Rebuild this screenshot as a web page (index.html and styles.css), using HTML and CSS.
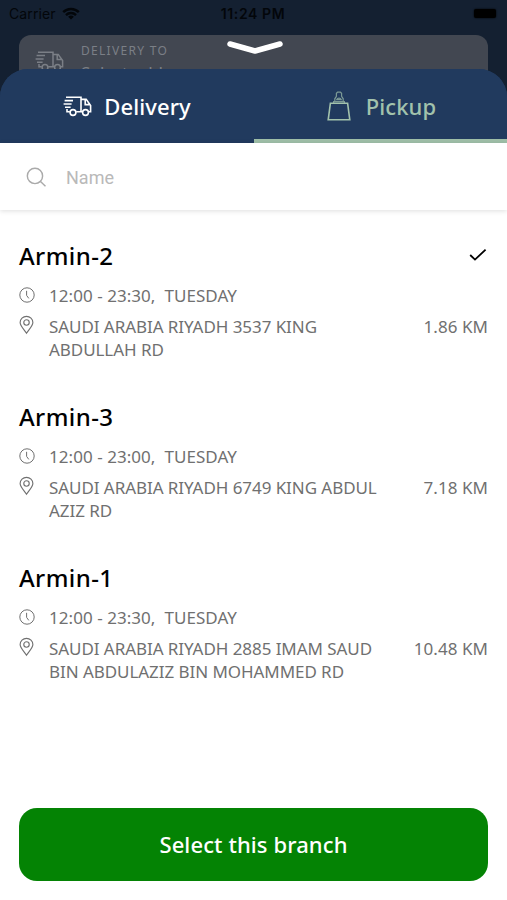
FILE: index.html
```
<!DOCTYPE html>
<html lang="en">
<head>
    <meta charset="UTF-8">
    <title>Select branch</title>
    <meta name="viewport" content="width=device-width, initial-scale=1">
    <link rel="stylesheet" href="styles.css">
</head>
<body>
    <svg class="defs" width="0" height="0">
        <symbol id="truck" viewBox="0 0 29 21">
            <path d="M3 1.2H18V15.8H13.2M6.8 15.8H4V13M18 3.4H23.2L27.6 9.5V15.8H25.6M19.4 15.8H18M22.2 3.6V8.6H27M1.6 4.6H10M.6 8H8.6M2 11.3H7.6"/>
            <circle cx="10" cy="16.5" r="2.9"/>
            <circle cx="22.5" cy="16.5" r="2.9"/>
        </symbol>
        <symbol id="clock" viewBox="0 0 16 16">
            <circle cx="8" cy="8" r="7.2"/>
            <path d="M7.6 3.8V8.4L9.8 11.4"/>
        </symbol>
        <symbol id="pin" viewBox="0 0 16 20">
            <path d="M8 18.8C5.6 15 1.2 11 1.2 7.4A6.8 6.6 0 0 1 14.8 7.4C14.8 11 10.4 15 8 18.8Z"/>
            <circle cx="8" cy="7.3" r="2.9"/>
        </symbol>
    </svg>

    <div class="app">
        <div class="backdrop">
            <div class="status-bar">
                <span class="carrier">Carrier
                    <svg class="wifi" viewBox="0 0 18 13">
                        <path d="M1.2 5.2A11 11 0 0 1 16.8 5.2M4 8.1A7 7 0 0 1 14 8.1"/>
                        <path class="dot" d="M9 12.6L6.1 9.8A4.2 4.2 0 0 1 11.9 9.8Z"/>
                    </svg>
                </span>
                <span class="time">11:24 PM</span>
                <span class="battery"></span>
            </div>
            <div class="address-card">
                <svg class="truck"><use href="#truck"/></svg>
                <div>
                    <div class="label">DELIVERY TO</div>
                    <div class="value">Select address</div>
                </div>
            </div>
            <svg class="handle" viewBox="0 0 58 16"><path d="M4 4L29 11L54 4"/></svg>
        </div>

        <div class="sheet">
            <div class="tabs">
                <div class="tab">
                    <svg class="truck"><use href="#truck"/></svg>
                    <span>Delivery</span>
                </div>
                <div class="tab active">
                    <svg class="bag" viewBox="0 0 24 30">
                        <path d="M3.4 12.2H20.6L22.8 28.8H1.2Z"/>
                        <path class="thin" d="M6.6 12V10.6H17.4V12M7.8 10.4V7.8L9.4 5.4V2.2L10.6 1.2H13.4L14.6 2.2V5.4L16.2 7.8V10.4M9.8 8.6A2.4 2.4 0 0 1 14.2 8.6Z"/>
                    </svg>
                    <span>Pickup</span>
                </div>
            </div>

            <div class="search">
                <svg class="search-icon" viewBox="0 0 22 22"><circle cx="9.4" cy="9.4" r="8"/><path d="M15.2 15.2L20.4 20.2"/></svg>
                <input type="text" placeholder="Name">
            </div>

            <div class="branches">
                <div class="branch">
                    <div class="branch-head">
                        <h2>Armin-2</h2>
                        <svg class="check" viewBox="0 0 20 14"><path d="M2.2 7L7 11.6L17.6 1.6"/></svg>
                    </div>
                    <div class="hours"><svg class="clock"><use href="#clock"/></svg>12:00 - 23:30,&nbsp; TUESDAY</div>
                    <div class="address">
                        <svg class="pin"><use href="#pin"/></svg>
                        <p>SAUDI ARABIA RIYADH 3537 KING<br>ABDULLAH RD</p>
                        <span>1.86 KM</span>
                    </div>
                </div>
                <div class="branch">
                    <div class="branch-head"><h2>Armin-3</h2></div>
                    <div class="hours"><svg class="clock"><use href="#clock"/></svg>12:00 - 23:00,&nbsp; TUESDAY</div>
                    <div class="address">
                        <svg class="pin"><use href="#pin"/></svg>
                        <p>SAUDI ARABIA RIYADH 6749 KING ABDUL<br>AZIZ RD</p>
                        <span>7.18 KM</span>
                    </div>
                </div>
                <div class="branch">
                    <div class="branch-head"><h2>Armin-1</h2></div>
                    <div class="hours"><svg class="clock"><use href="#clock"/></svg>12:00 - 23:30,&nbsp; TUESDAY</div>
                    <div class="address">
                        <svg class="pin"><use href="#pin"/></svg>
                        <p>SAUDI ARABIA RIYADH 2885 IMAM SAUD<br>BIN ABDULAZIZ BIN MOHAMMED RD</p>
                        <span>10.48 KM</span>
                    </div>
                </div>
            </div>

            <div class="footer">
                <button class="select-btn">Select this branch</button>
            </div>
        </div>
    </div>
</body>
</html>
```
FILE: styles.css
```
* { box-sizing: border-box; }
body { margin: 0; font-family: "Noto Sans", sans-serif; background: #fff; }
svg { display: block; flex: none; fill: none; stroke: currentColor; }
.defs { position: absolute; }
.app { height: 900px; display: flex; flex-direction: column; overflow: hidden; background: #142031; }

/* dimmed home screen behind the sheet */
.backdrop { position: relative; flex: none; height: 105px; overflow: hidden; }
.status-bar { display: grid; grid-template-columns: 1fr auto 1fr; align-items: center; height: 27px; padding: 0 11px 0 9px; font-family: Inter, sans-serif; font-size: 14px; color: #03060a; }
.carrier { display: flex; align-items: center; gap: 6px; letter-spacing: .1px; }
.wifi { width: 18px; height: 13px; stroke-width: 2.4; }
.wifi .dot { fill: currentColor; stroke: none; }
.time { padding-left: 1px; font-weight: 600; letter-spacing: .6px; }
.battery { justify-self: end; width: 22px; height: 9px; border-radius: 2px; background: #000; box-shadow: 0 0 2px #000; }
.address-card { display: flex; gap: 17px; height: 90px; margin: 8px 19px 0; padding: 7px 16px; border-radius: 12px; background: #424751; color: #7b7f86; }
.address-card .truck { margin-top: 9px; stroke-width: 1.5; }
.label { font-size: 12px; line-height: 17px; letter-spacing: 1.3px; }
.value { margin-top: 2px; font-size: 17px; line-height: 24px; }
.handle { position: absolute; top: 40px; left: 226px; width: 58px; height: 16px; color: #fff; stroke-width: 5.5; stroke-linecap: round; stroke-linejoin: round; }
.truck { width: 29px; height: 21px; stroke-width: 1.6; }

.sheet { position: relative; flex: 1; display: flex; flex-direction: column; margin-top: -36px; border-radius: 28px 28px 0 0; background: linear-gradient(#213a5e 74px, #fff 74px); overflow: hidden; }
.tabs { display: grid; grid-template-columns: 254px 1fr; height: 74px; background: #213a5e; }
.tab { display: flex; align-items: center; justify-content: center; gap: 12px; border-bottom: 0 solid #9fbfa8; color: #fff; font-size: 22px; font-weight: 500; letter-spacing: .1px; }
.tab.active { gap: 15px; padding: 4px 0 0 2px; border-bottom-width: 4px; color: #a2c2ac; }
.bag { width: 24px; height: 30px; margin-bottom: 1px; stroke-width: 1.6; }
.bag .thin { stroke-width: 1.2; opacity: .7; }

.search { display: flex; align-items: center; gap: 19px; height: 67px; padding: 1px 26px 0; box-shadow: 0 1px 5px #0002; }
.search-icon { width: 21px; height: 21px; color: #aaa; stroke-width: 1.5; }
.search input { flex: 1; min-width: 0; padding: 0; border: 0; outline: 0; font: 18px Roboto, sans-serif; color: #333; }
.search input::placeholder { color: #b9b9b9; opacity: 1; }

.branches { flex: 1; padding: 27px 19px 0; }
.branch { height: 161px; color: #707070; font-size: 17px; }
.branch-head { display: flex; align-items: center; justify-content: space-between; height: 36px; }
h2 { margin: 0; font-size: 24px; font-weight: 500; letter-spacing: .4px; color: #000; }
.check { width: 20px; height: 14px; color: #000; stroke-width: 1.8; }
.hours { display: flex; align-items: center; gap: 14px; height: 24px; margin-top: 10px; letter-spacing: .05px; }
.clock { width: 16px; height: 16px; stroke-width: 1; }
.address { display: flex; gap: 14px; margin-top: 8px; line-height: 23px; letter-spacing: -.06px; }
.address p { flex: 1; margin: 0; white-space: nowrap; }
.address span { letter-spacing: .05px; }
.pin { width: 15px; height: 20px; margin-right: 1px; stroke-width: 1.2; }

.footer { padding: 0 19px 19px; }
.select-btn { display: block; width: 100%; height: 73px; padding: 0 0 2px; border: 0; border-radius: 18px; background: #048304; color: #fff; font: 500 22px "Noto Sans", sans-serif; letter-spacing: .1px; }
```
